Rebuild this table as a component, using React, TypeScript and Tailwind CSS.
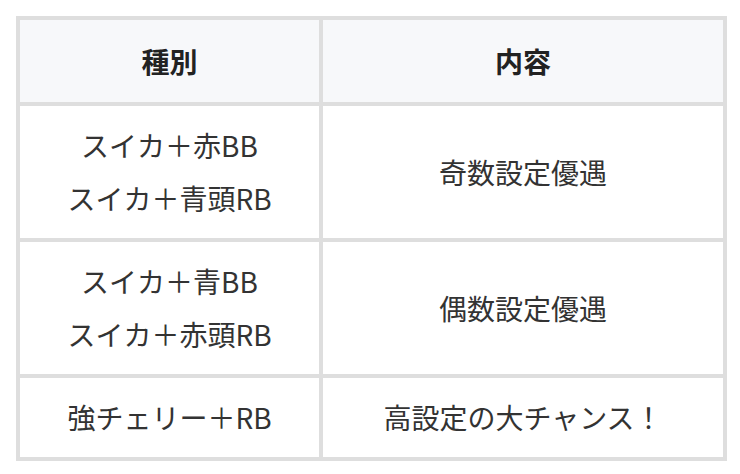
const rows: { kind: string[]; detail: string }[] = [
  { kind: ["スイカ＋赤BB", "スイカ＋青頭RB"], detail: "奇数設定優遇" },
  { kind: ["スイカ＋青BB", "スイカ＋赤頭RB"], detail: "偶数設定優遇" },
  { kind: ["強チェリー＋RB"], detail: "高設定の大チャンス！" },
];

export default function App() {
  return (
    <div
      className="w-[740px] h-[474px] bg-white pt-4 pl-4"
      style={{ fontFamily: '"Noto Sans CJK JP", "Noto Sans", sans-serif' }}
    >
      <div className="grid w-[711px] grid-cols-[299px_400px] gap-[4px] bg-[#dedede] p-[4px] text-[28px] text-[#333]">
        <div className="flex h-[82px] items-center justify-center bg-[#f7f8fa] font-bold text-[#222]">
          種別
        </div>
        <div className="flex h-[82px] items-center justify-center bg-[#f7f8fa] font-bold text-[#222]">
          内容
        </div>
        {rows.map((row, i) => (
          <div key={i} className="contents">
            <div className="flex flex-col items-center justify-center bg-white py-[13px] leading-[53px]">
              {row.kind.map((k) => (
                <span key={k}>{k}</span>
              ))}
            </div>
            <div className="flex items-center justify-center bg-white py-[13px] leading-[53px]">
              {row.detail}
            </div>
          </div>
        ))}
      </div>
    </div>
  );
}
